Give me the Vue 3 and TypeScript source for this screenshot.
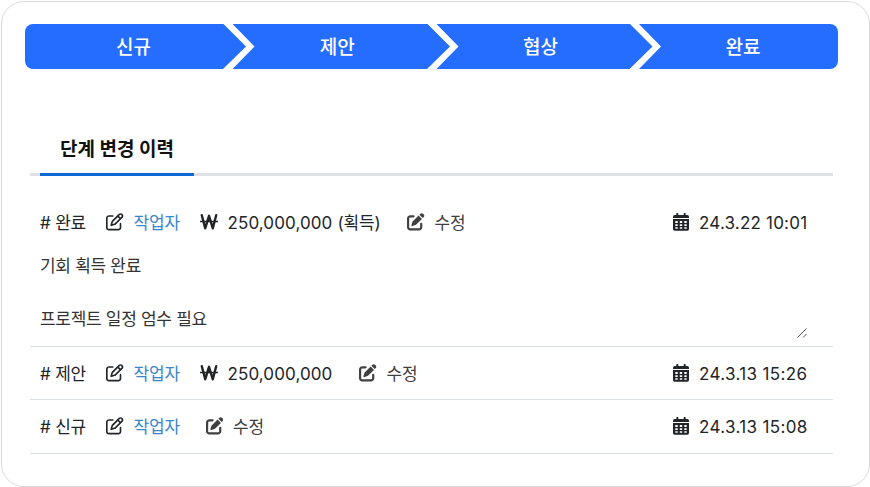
<script setup lang="ts">
interface HistoryEntry {
  stage: string
  worker: string
  amount?: string
  won?: boolean
  date: string
  note?: string
}

const stages: string[] = ['신규', '제안', '협상', '완료']

const history: HistoryEntry[] = [
  {
    stage: '완료',
    worker: '작업자',
    amount: '250,000,000',
    won: true,
    date: '24.3.22 10:01',
    note: '기회 획득 완료\n\n프로젝트 일정 엄수 필요',
  },
  { stage: '제안', worker: '작업자', amount: '250,000,000', date: '24.3.13 15:26' },
  { stage: '신규', worker: '작업자', date: '24.3.13 15:08' },
]
</script>

<template>
  <main class="card">
    <ol class="stages">
      <li v-for="stage in stages" :key="stage" class="stage">{{ stage }}</li>
    </ol>

    <nav class="tabs">
      <span class="tab">단계 변경 이력</span>
    </nav>

    <section class="history">
      <article v-for="entry in history" :key="entry.date" class="entry" :class="{ open: entry.note }">
        <div class="line">
          <span class="name"># {{ entry.stage }}</span>
          <svg class="icon" viewBox="0 0 512 512">
            <path d="M441 58.9L453.1 71c9.4 9.4 9.4 24.6 0 33.9L424 134.1 377.9 88 407 58.9c9.4-9.4 24.6-9.4 33.9 0zM209.8 256.2L344 121.9 390.1 168 255.8 302.2c-2.9 2.9-6.5 5-10.4 6.1l-58.5 16.7 16.7-58.5c1.1-3.9 3.2-7.5 6.1-10.4zM373.1 25L175.8 222.2c-8.7 8.7-15 19.4-18.3 31.1l-28.6 100c-2.4 8.4-.1 17.4 6.1 23.6s15.2 8.5 23.6 6.1l100-28.6c11.8-3.4 22.5-9.7 31.1-18.3L487 138.9c28.1-28.1 28.1-73.7 0-101.8L474.9 25C446.8-3.1 401.2-3.1 373.1 25zM88 64C39.4 64 0 103.4 0 152V424c0 48.6 39.4 88 88 88H360c48.6 0 88-39.4 88-88V312c0-13.3-10.7-24-24-24s-24 10.7-24 24V424c0 22.1-17.9 40-40 40H88c-22.1 0-40-17.9-40-40V152c0-22.1 17.9-40 40-40H200c13.3 0 24-10.7 24-24s-10.7-24-24-24H88z" />
          </svg>
          <a class="worker">{{ entry.worker }}</a>
          <template v-if="entry.amount">
            <svg class="icon won" viewBox="0 0 18 18">
              <path d="M1.8 2.2 5.2 15.3 9 2.8 12.8 15.3 16.2 2.2" />
              <path class="bar" d="M.4 8.5h17.2" />
            </svg>
            <span class="amount">{{ entry.amount }}</span>
            <span v-if="entry.won" class="result">(획득)</span>
          </template>
          <span class="edit" :class="{ near: !entry.amount }">
            <svg class="icon" viewBox="0 0 512 512">
              <path d="M471.6 21.7c-21.9-21.9-57.3-21.9-79.2 0L362.3 51.7l97.9 97.9 30.1-30.1c21.9-21.9 21.9-57.3 0-79.2L471.6 21.7zm-299.2 220c-6.1 6.1-10.8 13.6-13.5 21.9l-29.6 88.8c-2.9 8.6-.6 18.1 5.8 24.6s15.9 8.7 24.6 5.8l88.8-29.6c8.2-2.7 15.7-7.4 21.9-13.5L437.7 172.3 339.7 74.3 172.4 241.7zM96 64C43 64 0 107 0 160V416c0 53 43 96 96 96H352c53 0 96-43 96-96V320c0-17.7-14.3-32-32-32s-32 14.3-32 32v96c0 17.7-14.3 32-32 32H96c-17.7 0-32-14.3-32-32V160c0-17.7 14.3-32 32-32h96c17.7 0 32-14.3 32-32s-14.3-32-32-32H96z" />
            </svg>
            <span class="edit-label">수정</span>
          </span>
          <svg class="icon calendar" viewBox="0 0 16 18">
            <path fill-rule="evenodd" d="M3.3.9a1 1 0 0 1 2 0V2h5.4V.9a1 1 0 0 1 2 0V2h1.6A1.7 1.7 0 0 1 16 3.7V5H0V3.7A1.7 1.7 0 0 1 1.7 2h1.6zM0 6h16v10.1a1.7 1.7 0 0 1-1.7 1.7H1.7A1.7 1.7 0 0 1 0 16.1zM2.3 8v2h2.4V8zM6.8 8v2h2.4V8zM11.3 8v2h2.4V8zM2.3 11.2v1.7h2.4v-1.7zM6.8 11.2v1.7h2.4v-1.7zM11.3 11.2v1.7h2.4v-1.7zM2.3 14.2v1.6h2.4v-1.6zM6.8 14.2v1.6h2.4v-1.6zM11.3 14.2v1.6h2.4v-1.6z" />
          </svg>
          <time class="date">{{ entry.date }}</time>
        </div>
        <div v-if="entry.note" class="note">
          <p>{{ entry.note }}</p>
          <svg class="grip" viewBox="0 0 10 10"><path d="M.5 9.5 9.5.5M6 9.5 9.5 6" /></svg>
        </div>
      </article>
    </section>
  </main>
</template>

<style>
body {
  background: #fff;
}
</style>

<style scoped>
.card {
  box-sizing: border-box;
  width: 869px;
  height: 486px;
  margin: 1px 0 0 1px;
  border: 1px solid #d9d9d9;
  border-radius: 23px;
  padding: 22px 31px 0 23px;
  background: #fff;
  color: #212529;
  font-family: Inter, 'Noto Sans CJK KR', sans-serif;
  font-size: 17px;
}
.stages {
  display: grid;
  grid-template-columns: 207.5px 204px 202.5px 199px;
  height: 45px;
  margin: 0;
  padding: 0;
  list-style: none;
  border-radius: 8px;
  overflow: hidden;
}
.stage {
  box-sizing: border-box;
  display: flex;
  align-items: center;
  justify-content: center;
  margin-right: -13.5px;
  padding: 0 8px 2px 0;
  background: #246dff;
  color: #fff;
  font-size: 19px;
  font-weight: 500;
  clip-path: polygon(0 0, calc(100% - 22.5px) 0, 100% 50%, calc(100% - 23px) 100%, 0 100%, 22px 50%);
}
.stage:first-child {
  padding-right: 4px;
  clip-path: polygon(0 0, calc(100% - 22.5px) 0, 100% 50%, calc(100% - 23px) 100%, 0 100%);
}
.stage:last-child {
  margin-right: 0;
  padding: 0 0 2px 9px;
  clip-path: polygon(0 0, 100% 0, 100% 100%, 0 100%, 22px 50%);
}
.tabs {
  display: flex;
  box-sizing: border-box;
  width: 803px;
  height: 57px;
  margin: 50px 0 0 5px;
  padding-left: 10px;
  border-bottom: 3px solid #dee2e6;
}
.tab {
  box-sizing: border-box;
  width: 154px;
  height: 57px;
  border-bottom: 3px solid #1068d4;
  line-height: 61px;
  text-align: center;
  color: #111;
  font-size: 19px;
  font-weight: 700;
}
.history {
  width: 803px;
  margin-left: 5px;
  padding-top: 20px;
}
.entry {
  box-sizing: border-box;
  height: 53px;
  padding: 0 25px 0 10px;
  border-bottom: 1px solid #d9dfe5;
}
.entry.open {
  height: 151px;
}
.entry:last-child {
  height: 54px;
}
.line {
  display: flex;
  align-items: center;
  height: 52px;
  white-space: nowrap;
}
.name {
  width: 66px;
  padding-bottom: 1px;
  letter-spacing: -0.2px;
}
.icon {
  flex: none;
  width: 17.5px;
  height: 17.5px;
  fill: currentColor;
}
.worker {
  width: 66px;
  margin-left: 10px;
  padding-bottom: 1px;
  color: #3c87cc;
  letter-spacing: -0.2px;
}
.won {
  width: 18px;
  height: 18px;
  fill: none;
  stroke: currentColor;
  stroke-width: 2.4;
  stroke-linejoin: round;
  stroke-linecap: round;
}
.won .bar {
  stroke-width: 1.6;
}
.amount {
  width: 105px;
  margin-left: 10px;
  padding-top: 1px;
  letter-spacing: 0.1px;
}
.result {
  width: 43px;
  margin-left: 5px;
  padding-bottom: 1px;
  letter-spacing: -0.2px;
}
.edit {
  display: flex;
  align-items: center;
  gap: 10px;
  margin-left: 26.5px;
  color: #404040;
}
.edit.near {
  margin-left: 6px;
}
.edit-label {
  padding-bottom: 1px;
  letter-spacing: -0.2px;
}
.calendar {
  width: 16px;
  height: 18px;
  margin-left: auto;
}
.date {
  width: 109px;
  margin-left: 10px;
  padding-top: 1px;
  letter-spacing: 0.35px;
}
.entry.open .date {
  letter-spacing: 0.2px;
}
.note {
  display: flex;
  justify-content: space-between;
  align-items: flex-end;
  height: 92px;
}
.note p {
  align-self: flex-start;
  margin: 5px 0 0;
  white-space: pre-line;
  line-height: 26.5px;
  letter-spacing: -0.3px;
  color: #333;
}
.grip {
  width: 10px;
  height: 10px;
  margin: 0 1px 2px 0;
  fill: none;
  stroke: #555;
  stroke-width: 1;
}
</style>
